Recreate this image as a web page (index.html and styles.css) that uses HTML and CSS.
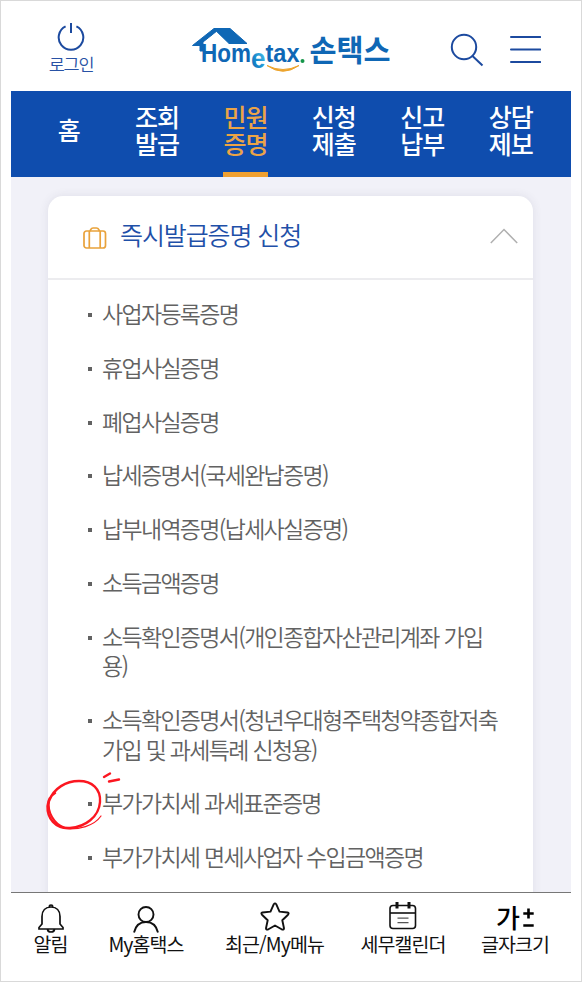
FILE: index.html
```html
<!DOCTYPE html>
<html lang="ko">
<head>
    <meta charset="UTF-8">
    <meta name="viewport" content="width=device-width, initial-scale=1.0">
    <title>Hometax 손택스</title>
    <link rel="stylesheet" href="styles.css">
</head>
<body>
    <div class="frame">
        <header class="header">
            <a class="login">
                <svg width="28" height="30" viewBox="0 0 28 30" fill="none" stroke="#1c4a9f" stroke-width="2">
                    <path d="M8.6 4.4A12.3 12.3 0 1 0 19.4 4.4M14 1V11"/>
                </svg>
                <span>로그인</span>
            </a>
            <svg class="logo" width="204" height="56" viewBox="0 0 204 56">
                <defs>
                    <linearGradient id="eColor" x1="1" y1="0" x2="0" y2="1">
                        <stop offset="0" stop-color="#5fd0f0"/>
                        <stop offset="0.55" stop-color="#1b8fd0"/>
                        <stop offset="1" stop-color="#0c5fae"/>
                    </linearGradient>
                </defs>
                <path d="M23 8.5H39L56 23.5H38L25.500 11.500L12 22V31H9V25.500H1.500Z" fill="#0f67b5" stroke="#0f67b5" stroke-linejoin="round"/>
                <path d="M25.500 12L36.500 23H12.500Z" fill="#fff"/>
                <text class="logo-en" x="10" y="42" textLength="50" lengthAdjust="spacingAndGlyphs">Hom</text>
                <text class="logo-e" x="60" y="48" textLength="14.500" lengthAdjust="spacingAndGlyphs" fill="url(#eColor)">e</text>
                <text class="logo-en" x="74.500" y="42" textLength="34" lengthAdjust="spacingAndGlyphs">tax</text>
                <circle cx="111.500" cy="41" r="2" fill="#15964a"/>
                <path d="M76 45.500Q92 57 108 45.500Q92 53.500 76 45.500Z" fill="#eda42d" stroke="#eda42d"/>
                <text class="logo-ko" x="118.500" y="41" textLength="81" lengthAdjust="spacingAndGlyphs">손택스</text>
            </svg>
            <div class="tools">
                <svg width="34" height="34" viewBox="0 0 34 34" fill="none" stroke="#1c4a9f" stroke-width="2">
                    <circle cx="14" cy="14" r="12.200"/>
                    <path d="M22.500 23L32.500 32.500"/>
                </svg>
                <svg width="32" height="34" viewBox="0 0 32 34" stroke="#1c4a9f" stroke-width="2" stroke-linecap="round">
                    <path d="M2 4H31.200M2 16.500H31.200M2 29H31.200"/>
                </svg>
            </div>
        </header>

        <nav class="nav">
            <a>홈</a>
            <a>조회<br>발급</a>
            <a class="active">민원<br>증명</a>
            <a>신청<br>제출</a>
            <a>신고<br>납부</a>
            <a>상담<br>제보</a>
        </nav>

        <main class="content">
            <section class="card">
                <div class="card-head">
                    <svg width="24" height="22" viewBox="0 0 24 22" fill="none" stroke="#e9a23b" stroke-width="1.700">
                        <rect x="1" y="4" width="21.500" height="17" rx="2.500"/>
                        <path d="M6.300 4V21M17.200 4V21M7 4L8 2.200Q8.500 1 10 1H13.500Q15 1 15.500 2.200L16.500 4"/>
                    </svg>
                    <h2>즉시발급증명 신청</h2>
                    <svg class="chevron" width="28" height="16" viewBox="0 0 28 16" fill="none" stroke="#b0b0b0" stroke-width="1.500">
                        <path d="M.8 15L14 1.500L27.200 15"/>
                    </svg>
                </div>
                <ul class="list">
                    <li>사업자등록증명</li>
                    <li>휴업사실증명</li>
                    <li>폐업사실증명</li>
                    <li>납세증명서(국세완납증명)</li>
                    <li>납부내역증명(납세사실증명)</li>
                    <li>소득금액증명</li>
                    <li>소득확인증명서(개인종합자산관리계좌 가입<br>용)</li>
                    <li>소득확인증명서(청년우대형주택청약종합저축<br>가입 및 과세특례 신청용)</li>
                    <li>
                        부가가치세 과세표준증명
                        <svg class="mark" width="80" height="64" viewBox="0 0 80 64" fill="none" stroke="#fb1620" stroke-linecap="round">
                            <path stroke-width="2.400" d="M5 31C10 18 22 11 35 11C48 11 57 19 56 32C55 47 41 57 26 58C11 59 3 48 3.500 36C4 31 6 26 11 23"/>
                            <path stroke-width="2.200" d="M5 31C3 42 10 54 20 57.500"/>
                            <path stroke-width="1.200" d="M20 58.500C35 60 50 56 57 46"/>
                            <path stroke-width="2.400" d="M60 7L66 3.500M65 11.500L75 9.500"/>
                        </svg>
                    </li>
                    <li>부가가치세 면세사업자 수입금액증명</li>
                </ul>
            </section>
        </main>

        <footer class="tabbar">
            <a class="tab tab-alarm">
                <svg width="28" height="30" viewBox="0 0 28 30" fill="none" stroke="#111" stroke-width="1.700">
                    <path d="M5 22V14.500C5 8.500 8.500 5 14 5S23 8.500 23 14.500V22L26 25.500V27H2V25.500ZM10.500 27.500Q11 30 14 30T17.500 27.500M12.300 5V4.200Q12.300 3 14 3T15.700 4.200V5"/>
                </svg>
                <span>알림</span>
            </a>
            <a class="tab tab-my">
                <svg width="28" height="30" viewBox="0 0 28 30" fill="none" stroke="#111" stroke-width="1.900">
                    <circle cx="14" cy="12.500" r="7.500"/>
                    <path d="M2 30.500C3.500 24 8 20 14 20S24.500 24 26 30.500"/>
                </svg>
                <span>My홈택스</span>
            </a>
            <a class="tab tab-recent">
                <svg width="30" height="30" viewBox="0 0 30 30" fill="none" stroke="#111" stroke-width="1.900" stroke-linejoin="round">
                    <path d="M13.800 2.200Q15 .5 16.200 2.200L19.500 9.600L27.500 10.500Q29.500 11 28 12.700L22.300 18.300L24 26.200Q24 28 22 27.500L15 23.500L8 27.500Q6 28 6 26.200L7.700 18.300L2 12.700Q.5 11 2.500 10.500L10.500 9.600Z"/>
                </svg>
                <span>최근/My메뉴</span>
            </a>
            <a class="tab tab-calendar">
                <svg width="28" height="30" viewBox="0 0 28 30" fill="none" stroke="#111" stroke-width="1.600">
                    <rect x="1" y="3.500" width="25.500" height="23" rx="3"/>
                    <path d="M1 11H26.500"/>
                    <path d="M8.500 16.200H19.500M8.500 20.700H19.500" stroke="#555" stroke-width="1.200"/>
                    <path d="M8 0V6.500M20 0V6.500" stroke-width="3"/>
                </svg>
                <span>세무캘린더</span>
            </a>
            <a class="tab tab-size">
                <b class="size-icon">가<svg width="11" height="22" viewBox="0 0 11 22" stroke="#000" stroke-width="2.600"><path d="M.3 7.500H10.700M5.500 2.500V12.500M.3 19.500H10.700"/></svg></b>
                <span>글자크기</span>
            </a>
        </footer>
    </div>
</body>
</html>
```
FILE: styles.css
```css
* {
    box-sizing: border-box;
}

body {
    margin: 0;
    background-color: #fff;
    font-family: 'Noto Sans CJK KR', sans-serif;
}

.frame {
    display: flex;
    flex-direction: column;
    width: 582px;
    height: 982px;
    padding: 0 10px;
    border: 1px solid #d9d9d9;
    overflow: hidden;
}

/* Header */
.header {
    display: flex;
    flex: none;
    align-items: flex-start;
    height: 89.5px;
    padding-left: 38px;
}

.login {
    display: flex;
    flex-direction: column;
    align-items: center;
    width: 44px;
    padding-top: 21px;
    color: #2852a5;
    font-size: 17.5px;
    font-weight: 350;
    line-height: 23px;
    letter-spacing: -1.3px;
    white-space: nowrap;
}

.logo {
    margin: 19px 0 0 98px;
}

.logo-en,
.logo-e {
    font-family: 'Liberation Sans', sans-serif;
    font-weight: bold;
}

.logo-en {
    fill: #0f67b5;
    font-size: 26px;
}

.logo-e {
    font-size: 27px;
}

.logo-ko {
    fill: #0f67b5;
    font-size: 30px;
    font-weight: 700;
}

.tools {
    display: flex;
    gap: 25px;
    margin: 32px 0 0 55px;
}

/* Main menu */
.nav {
    display: grid;
    flex: none;
    grid-template-columns: repeat(6, 88.4px);
    height: 86.5px;
    padding-left: 14px;
    background-color: #0f4dae;
    color: #fff;
    font-size: 25px;
    font-weight: 500;
    line-height: 27px;
    letter-spacing: -1px;
}

.nav a {
    display: flex;
    align-items: center;
    justify-content: center;
    justify-self: center;
    width: 45px;
    padding: 0 1px 8px 0;
    white-space: nowrap;
}

.nav .active {
    border-bottom: 5px solid #f0a030;
    padding-bottom: 3px;
    color: #eba447;
}

/* Certificate list */
.content {
    flex: 1;
    min-height: 0;
    padding: 19px 38px 0 37px;
    background-color: #f1f1f8;
    overflow: hidden;
}

.card {
    height: 740px;
    border-radius: 15px;
    background-color: #fff;
    box-shadow: 0 0 10px rgba(60, 60, 90, 0.1);
}

.card-head {
    display: flex;
    align-items: center;
    height: 84px;
    padding: 0 15px 2px 35px;
    border-bottom: 2px solid #ececef;
}

.card-head > svg:first-child {
    margin-top: 3px;
}

.card-head h2 {
    margin: -4px 0 0 13px;
    color: #1f50a8;
    font-size: 25px;
    font-weight: 350;
    letter-spacing: -1.1px;
}

.chevron {
    margin-left: auto;
}

.list {
    margin: 0;
    padding: 19px 0 0 54px;
    list-style: none;
    color: #626262;
    font-size: 23px;
    font-weight: 350;
    line-height: 29.6px;
    letter-spacing: -1.7px;
    white-space: nowrap;
}

.list li {
    position: relative;
    margin-bottom: 24.2px;
}

.list li::before {
    content: '';
    position: absolute;
    top: 14px;
    left: -14px;
    width: 4px;
    height: 4px;
    background-color: #626262;
}

/* Hand-drawn ring around the highlighted item */
.mark {
    position: absolute;
    top: -18px;
    left: -58px;
}

/* Bottom bar */
.tabbar {
    display: flex;
    flex: none;
    height: 89px;
    padding-top: 9px;
    border-top: 1px solid #777;
    color: #111;
    font-size: 19.5px;
    font-weight: 400;
    line-height: 24px;
    letter-spacing: -0.95px;
}

.tab {
    display: flex;
    flex-direction: column;
    align-items: center;
    white-space: nowrap;
}

.tab svg {
    overflow: visible;
}

.tab-alarm {
    width: 79px;
}

.tab-my {
    width: 112px;
}

.tab-recent {
    width: 145px;
}

.tab-calendar {
    width: 112px;
}

.tab-size {
    width: 112px;
}

.size-icon {
    display: flex;
    align-items: center;
    gap: 4px;
    height: 30px;
    color: #000;
    font-size: 26px;
    font-weight: 500;
}
```
